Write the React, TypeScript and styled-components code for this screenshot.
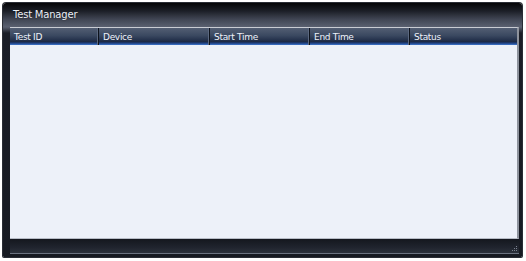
import React from 'react';
import styled, { createGlobalStyle } from 'styled-components';

const GlobalStyle = createGlobalStyle`
  html, body {
    margin: 0;
    padding: 0;
    background: #ffffff;
  }
  body {
    font-family: "DejaVu Sans", "Liberation Sans", sans-serif;
  }
`;

const Page = styled.div`
  padding: 3px 4px 4px 3px;
`;

const Window = styled.div`
  display: flex;
  flex-direction: column;
  width: 519px;
  height: 254px;
  box-sizing: border-box;
  border-radius: 3px 3px 1px 1px;
  background: linear-gradient(180deg, #050507 0px, #1c1f27 8px, #3f4452 16px, #5a6070 24px, #1b1e27 30px, #171a22 100%);
  box-shadow: 0 0 0 1px #2a2d35;
  overflow: hidden;
`;

const TitleBar = styled.header`
  height: 24px;
  flex: none;
  padding: 6px 0 0 10px;
  box-sizing: border-box;
  font-size: 10px;
  color: #e9edf5;
  letter-spacing: -0.2px;
  text-shadow: 0 0 2px rgba(0, 0, 0, 0.6);
`;

const Body = styled.div`
  flex: 1;
  display: flex;
  flex-direction: column;
  padding: 0 3px 0 7px;
`;

const Grid = styled.div`
  display: flex;
  flex-direction: column;
  height: 210px;
  border-top: 1px solid #c9ccd3;
  border-right: 2px solid #8e939d;
  border-bottom: 1px solid #b7bcc6;
  background: #edf1f9;
`;

const HeaderRow = styled.div`
  display: grid;
  grid-template-columns: 89px 111px 100px 100px 1fr;
  height: 17px;
  background: linear-gradient(180deg, #535e73 0%, #3a4860 45%, #1d2a45 80%, #1c3b78 88%, #3f78d0 100%);
`;

const HeaderCell = styled.div<{ $last?: boolean }>`
  display: flex;
  align-items: center;
  padding-left: 4px;
  font-size: 9px;
  color: #eef2fa;
  letter-spacing: -0.3px;
  border-right: ${(p) => (p.$last ? 'none' : '1px solid #0d121c')};
  box-shadow: ${(p) => (p.$last ? 'none' : 'inset -1px 0 0 #5b6880')};
`;

const Rows = styled.div`
  flex: 1;
`;

const StatusBar = styled.footer`
  position: relative;
  height: 14px;
  flex: none;
  background: linear-gradient(180deg, #14171e 0%, #20242e 60%, #2c313c 100%);
  border-bottom: 1px solid #6d7482;
`;

const Grip = styled.svg`
  position: absolute;
  right: 1px;
  bottom: 1px;
`;

const columns = ['Test ID', 'Device', 'Start Time', 'End Time', 'Status'];

export default function App() {
  return (
    <Page>
      <GlobalStyle />
      <Window>
        <TitleBar>Test Manager</TitleBar>
        <Body>
          <Grid>
            <HeaderRow>
              {columns.map((c, i) => (
                <HeaderCell key={c} $last={i === columns.length - 1}>
                  {c}
                </HeaderCell>
              ))}
            </HeaderRow>
            <Rows />
          </Grid>
          <StatusBar>
            <Grip width="7" height="7" viewBox="0 0 7 7">
              <rect x="5" y="1" width="1" height="1" fill="#7b8290" />
              <rect x="3" y="3" width="1" height="1" fill="#7b8290" />
              <rect x="5" y="3" width="1" height="1" fill="#7b8290" />
              <rect x="1" y="5" width="1" height="1" fill="#7b8290" />
              <rect x="3" y="5" width="1" height="1" fill="#7b8290" />
              <rect x="5" y="5" width="1" height="1" fill="#7b8290" />
            </Grip>
          </StatusBar>
        </Body>
      </Window>
    </Page>
  );
}
